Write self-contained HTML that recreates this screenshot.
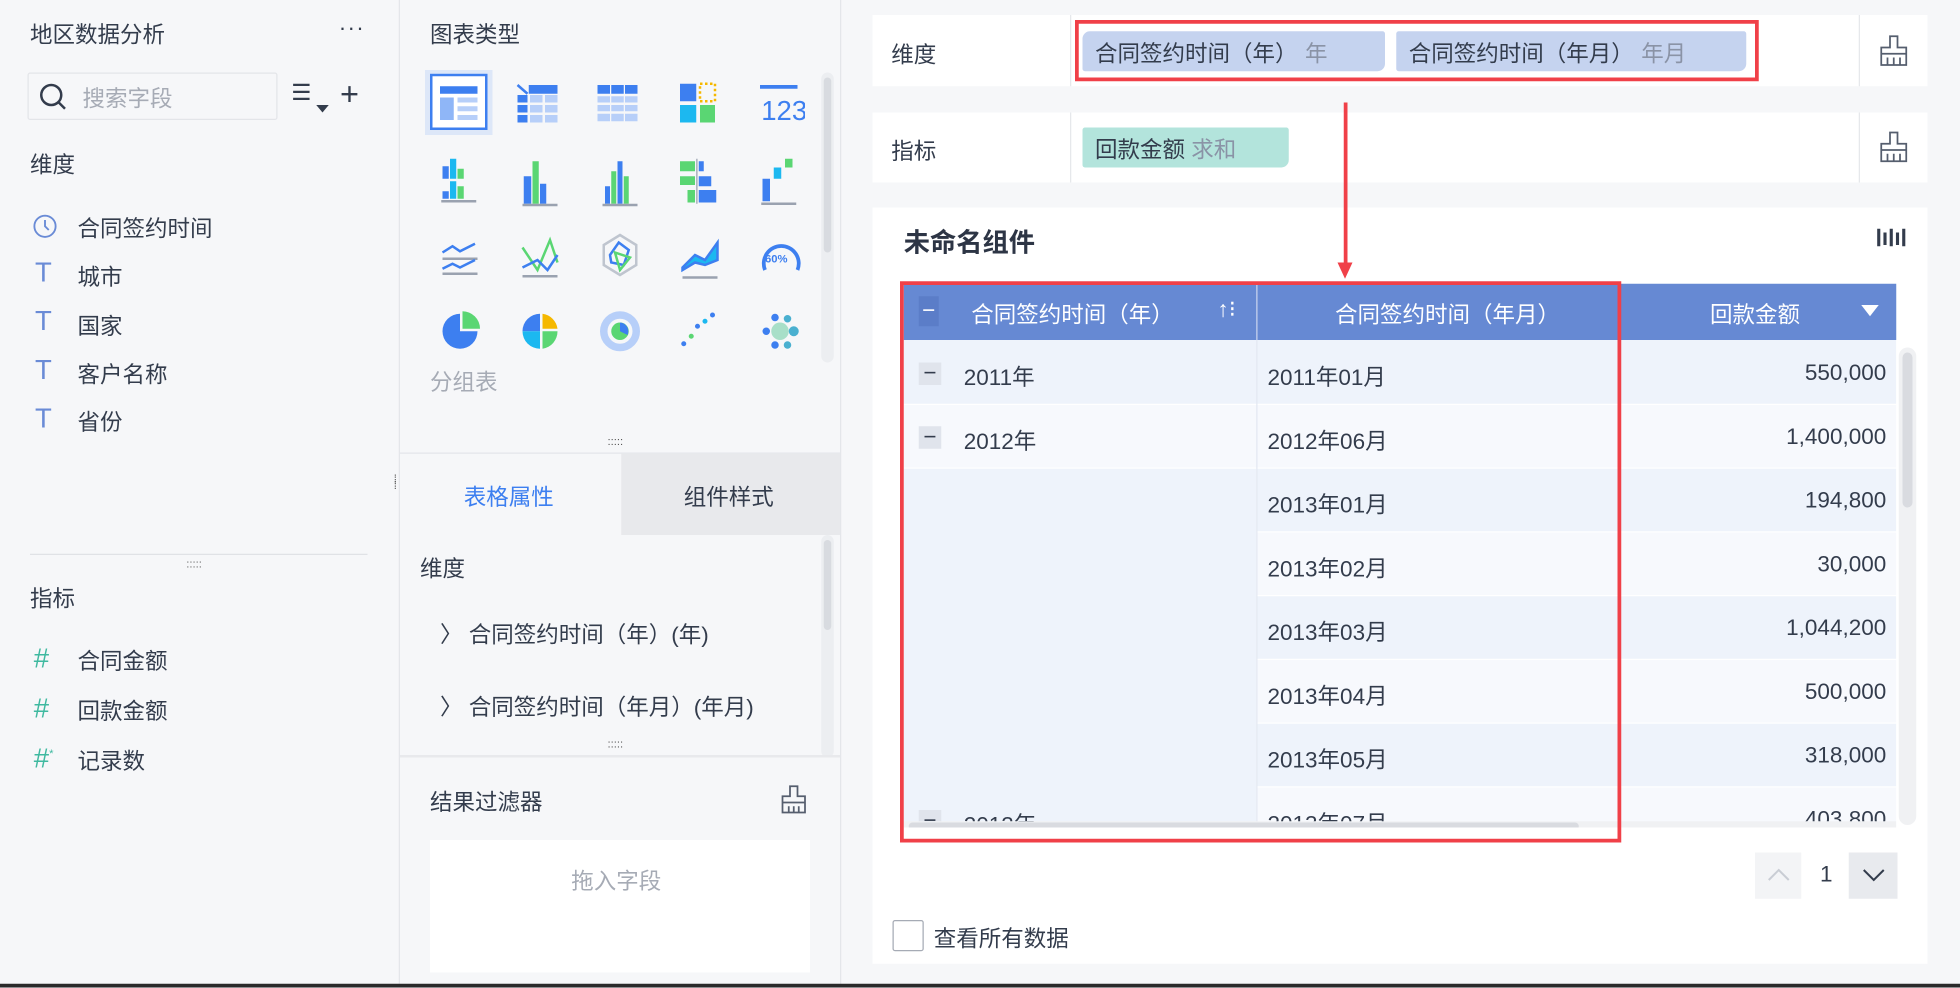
<!DOCTYPE html>
<html><head><meta charset="utf-8"><style>
*{box-sizing:border-box;margin:0;padding:0}
body{width:1960px;height:987px;overflow:hidden;background:#f6f7f9;font-family:"Liberation Sans","Noto Sans CJK SC",sans-serif;color:#333c4c}
#w{position:absolute;left:0;top:0;width:1568px;height:790px;transform:scale(1.25);transform-origin:0 0;background:#f6f7f9}
.a{position:absolute}
.t{font-size:18px;white-space:nowrap}
.ic{position:absolute;color:#6a8bd6;font-size:22px}
</style></head><body><div id="w">
<!-- left panel -->
<div class="a" style="left:319px;top:0;width:1px;height:790px;background:#e4e6ea"></div>
<div class="a t" style="left:24px;top:14px">地区数据分析</div>
<div class="a t" style="left:271px;top:12px;letter-spacing:1px">···</div>
<div class="a" style="left:22px;top:58px;width:200px;height:38px;border:1px solid #e3e5e9;border-radius:2px;background:#f6f7f9"></div>
<svg class="a" style="left:31px;top:66px" width="24" height="24"><circle cx="10" cy="10" r="8" fill="none" stroke="#333c4c" stroke-width="2"/><line x1="16" y1="16" x2="21" y2="21" stroke="#333c4c" stroke-width="2"/></svg>
<div class="a t" style="left:66px;top:65px;color:#a6abb5">搜索字段</div>
<div class="a" style="left:233px;top:64px;font-size:18px;color:#333c4c">☰</div>
<div class="a" style="left:253px;top:84px;width:0;height:0;border:5px solid transparent;border-top:6px solid #333c4c"></div>
<div class="a" style="left:272px;top:60px;font-size:26px;color:#333c4c">+</div>
<div class="a t" style="left:24px;top:118px">维度</div>
<svg class="a" style="left:26px;top:171px" width="20" height="20"><circle cx="10" cy="10" r="8.5" fill="none" stroke="#6a8bd6" stroke-width="1.5"/><path d="M10 5v5l3 3" fill="none" stroke="#6a8bd6" stroke-width="1.5"/></svg>
<div class="a t" style="left:62px;top:169px">合同签约时间</div>
<div class="ic" style="left:28px;top:205px">T</div><div class="a t" style="left:62px;top:208px">城市</div>
<div class="ic" style="left:28px;top:244px">T</div><div class="a t" style="left:62px;top:247px">国家</div>
<div class="ic" style="left:28px;top:283px">T</div><div class="a t" style="left:62px;top:286px">客户名称</div>
<div class="ic" style="left:28px;top:322px">T</div><div class="a t" style="left:62px;top:324px">省份</div>
<div class="a" style="left:24px;top:443px;width:270px;height:1px;background:#e0e2e6"></div>
<div class="a" style="left:149px;top:446px;font-size:9px;color:#666;letter-spacing:0">:::::</div>
<div class="a t" style="left:24px;top:465px">指标</div>
<div class="ic" style="left:27px;top:514px;color:#3fb9a0">#</div><div class="a t" style="left:62px;top:515px">合同金额</div>
<div class="ic" style="left:27px;top:554px;color:#3fb9a0">#</div><div class="a t" style="left:62px;top:555px">回款金额</div>
<div class="ic" style="left:27px;top:594px;color:#3fb9a0">#<sup style="font-size:9px">*</sup></div><div class="a t" style="left:62px;top:595px">记录数</div>
<!-- middle -->
<div class="a" style="left:672px;top:0;width:1px;height:790px;background:#e4e6ea"></div>
<div class="a t" style="left:344px;top:14px">图表类型</div>
<div class="a" style="left:340px;top:56px;width:54px;height:52px;background:#dde7f8"></div>
<div class="a" style="left:344px;top:59px;width:46px;height:45px;border:2px solid #3d7ff0;background:#fff"></div>
<svg class="a" style="left:344px;top:59px" width="300" height="230">
<rect x="8" y="10" width="30" height="6" fill="#3d7ff0"/><rect x="8" y="19" width="11" height="18" fill="#8fb6f7"/><rect x="22" y="19" width="16" height="4" fill="#b7cff9"/><rect x="22" y="26" width="16" height="4" fill="#b7cff9"/><rect x="22" y="33" width="16" height="4" fill="#b7cff9"/>
<g fill="#b7cff9"><rect x="80" y="17" width="10" height="6"/><rect x="92" y="17" width="10" height="6"/><rect x="80" y="25" width="10" height="6"/><rect x="92" y="25" width="10" height="6"/><rect x="80" y="33" width="10" height="6"/><rect x="92" y="33" width="10" height="6"/></g>
<g fill="#3d7ff0"><rect x="79" y="9" width="23" height="7"/><rect x="70" y="17" width="8" height="6"/><rect x="70" y="25" width="8" height="6"/><rect x="70" y="33" width="8" height="6"/></g><path d="M70 9l8 7" stroke="#3d7ff0" stroke-width="2"/>
<g fill="#3d7ff0"><rect x="134" y="9" width="10" height="7"/><rect x="145" y="9" width="10" height="7"/><rect x="156" y="9" width="10" height="7"/></g>
<g fill="#b7cff9"><rect x="134" y="18" width="10" height="5"/><rect x="145" y="18" width="10" height="5"/><rect x="156" y="18" width="10" height="5"/><rect x="134" y="25" width="10" height="5"/><rect x="145" y="25" width="10" height="5"/><rect x="156" y="25" width="10" height="5"/><rect x="134" y="32" width="10" height="6"/><rect x="145" y="32" width="10" height="6"/><rect x="156" y="32" width="10" height="6"/></g>
<rect x="200" y="8" width="13" height="14" fill="#3d7ff0"/><rect x="216" y="8" width="12" height="14" fill="none" stroke="#f5b800" stroke-width="2" stroke-dasharray="2 2"/><rect x="200" y="25" width="13" height="14" fill="#1cb8f0"/><rect x="216" y="25" width="12" height="14" fill="#5ad673"/>
<rect x="264" y="9" width="30" height="3" fill="#3d7ff0"/><text x="265" y="37" font-size="22" fill="#3d7ff0" font-family="Liberation Sans">123</text>
<g transform="translate(0,60)"><rect x="10" y="14" width="5" height="10" fill="#3d7ff0"/><rect x="16" y="8" width="5" height="16" fill="#1cb8f0"/><rect x="22" y="16" width="5" height="8" fill="#5ad673"/><rect x="10" y="34" width="5" height="6" fill="#3d7ff0"/><rect x="16" y="26" width="5" height="14" fill="#1cb8f0"/><rect x="22" y="30" width="5" height="10" fill="#5ad673"/><rect x="9" y="41" width="28" height="2" fill="#9aa2b0"/>
<rect x="75" y="22" width="6" height="22" fill="#3d7ff0"/><rect x="82" y="10" width="5" height="34" fill="#5ad673"/><rect x="88" y="28" width="5" height="16" fill="#3d7ff0"/><rect x="74" y="44" width="28" height="2" fill="#9aa2b0"/>
<rect x="140" y="30" width="4" height="14" fill="#3d7ff0"/><rect x="145" y="18" width="4" height="26" fill="#5ad673"/><rect x="150" y="10" width="4" height="34" fill="#3d7ff0"/><rect x="155" y="22" width="4" height="22" fill="#5ad673"/><rect x="138" y="44" width="28" height="2" fill="#9aa2b0"/>
<rect x="200" y="10" width="12" height="8" fill="#5ad673"/><rect x="200" y="22" width="12" height="7" fill="#5ad673"/><rect x="206" y="33" width="6" height="10" fill="#5ad673"/><rect x="213" y="8" width="1" height="36" fill="#9aa2b0"/><rect x="215" y="10" width="4" height="8" fill="#3d7ff0"/><rect x="215" y="22" width="10" height="8" fill="#3d7ff0"/><rect x="215" y="33" width="14" height="10" fill="#3d7ff0"/>
<rect x="266" y="24" width="6" height="18" fill="#3d7ff0"/><rect x="275" y="15" width="6" height="9" fill="#1cb8f0"/><rect x="284" y="8" width="6" height="7" fill="#5ad673"/><rect x="265" y="43" width="28" height="2" fill="#9aa2b0"/></g>
<g transform="translate(0,125)" fill="none" stroke-width="2"><path d="M10 18l8-5 6 4 12-6" stroke="#3d7ff0"/><path d="M10 23h28" stroke="#9aa2b0"/><path d="M10 31l8-4 6 3 12-6" stroke="#3d7ff0"/><path d="M10 35h28" stroke="#9aa2b0"/>
<path d="M74 14l12 18 10-24 6 18" stroke="#5ad673"/><path d="M74 30l12-6 8 8 8-12" stroke="#3d7ff0"/><path d="M74 37h28" stroke="#9aa2b0"/>
<path d="M152 4l13 8v16l-13 8-13-8V12z" stroke="#bfc5cf"/><path d="M144 20l7-10 8 6-4 12-10-2z" stroke="#3d7ff0"/><path d="M148 18l12 4-8 10z" stroke="#5ad673"/>
<path d="M202 30l10-10 8 4 10-14v14l-10 4-8-2-10 6z" fill="#1cb8f0" stroke="#3d7ff0"/><path d="M202 38h28" stroke="#9aa2b0"/>
<path d="M268 32a14 14 0 1 1 26 0" stroke="#3d7ff0" stroke-width="3"/><text x="268" y="26" font-size="9" fill="#3d7ff0" stroke="none" font-weight="bold" font-family="Liberation Sans">60%</text></g>
<g transform="translate(0,188)"><path d="M24 4a14 14 0 1 0 14 14H24z" fill="#3d7ff0"/><path d="M26 2v14h14A14 14 0 0 0 26 2z" fill="#5ad673"/>
<path d="M88 4a14 14 0 0 0-14 14h14z" fill="#3d7ff0"/><path d="M88 18H74a14 14 0 0 0 14 14z" fill="#1cb8f0"/><path d="M90 18v14a14 14 0 0 0 12-14z" fill="#5ad673"/><path d="M90 4v12h12A14 14 0 0 0 90 4z" fill="#f5b800"/>
<circle cx="152" cy="18" r="13" fill="none" stroke="#b7cff9" stroke-width="6"/><circle cx="152" cy="18" r="7" fill="#5ad673"/><path d="M152 11v7l6 3a7 7 0 0 0-6-10z" fill="#3d7ff0"/>
<circle cx="203" cy="28" r="2" fill="#3d7ff0"/><circle cx="209" cy="22" r="2" fill="#5ad673"/><circle cx="214" cy="14" r="2" fill="#3d7ff0"/><circle cx="220" cy="10" r="2" fill="#1cb8f0"/><circle cx="226" cy="5" r="2" fill="#3d7ff0"/>
<circle cx="280" cy="18" r="7" fill="#a8dfc8"/><circle cx="269" cy="18" r="3" fill="#3d7ff0"/><circle cx="291" cy="18" r="4" fill="#4ab0d0"/><circle cx="276" cy="7" r="3" fill="#3d7ff0"/><circle cx="286" cy="8" r="3" fill="#4ab0d0"/><circle cx="276" cy="29" r="3" fill="#3d7ff0"/><circle cx="286" cy="29" r="3" fill="#4ab0d0"/></g>
</svg>
<div class="a t" style="left:344px;top:292px;color:#a6abb5">分组表</div>
<div class="a" style="left:657px;top:58px;width:10px;height:232px;border-radius:5px;background:#eceef1"></div>
<div class="a" style="left:659px;top:62px;width:6px;height:140px;border-radius:3px;background:#d8dbe0"></div>
<div class="a" style="left:486px;top:348px;font-size:9px;color:#555">:::::</div>
<div class="a" style="left:320px;top:362px;width:352px;height:1px;background:#e4e6ea"></div>
<div class="a" style="left:497px;top:363px;width:175px;height:65px;background:#e8e9ec"></div>
<div class="a t" style="left:371px;top:384px;color:#3d7ff0">表格属性</div>
<div class="a t" style="left:547px;top:384px">组件样式</div>
<div class="a" style="left:315px;top:381px;font-size:9px;color:#555;line-height:5px">⁞<br>⁞</div>
<div class="a t" style="left:336px;top:441px">维度</div>
<div class="a t" style="left:352px;top:494px">〉 合同签约时间（年）(年)</div>
<div class="a t" style="left:352px;top:552px">〉 合同签约时间（年月）(年月)</div>
<div class="a" style="left:657px;top:428px;width:10px;height:178px;border-radius:5px;background:#eceef1"></div>
<div class="a" style="left:659px;top:432px;width:6px;height:72px;border-radius:3px;background:#d8dbe0"></div>
<div class="a" style="left:486px;top:590px;font-size:9px;color:#555">:::::</div>
<div class="a" style="left:320px;top:604px;width:352px;height:2px;background:#e8e9ec"></div>
<div class="a t" style="left:344px;top:628px">结果过滤器</div>
<svg class="a" style="left:624px;top:628px" width="22" height="24"><path d="M8 1h6v8h6v5H2V9h6zM2 14h18v8H2zM7 17v5M11 17v5M15 17v5" fill="none" stroke="#555e6e" stroke-width="1.4"/></svg>
<div class="a" style="left:344px;top:672px;width:304px;height:106px;background:#fff"></div>
<div class="a t" style="left:457px;top:691px;color:#a6abb5">拖入字段</div>
<div class="a" style="left:0;top:787px;width:1568px;height:3px;background:#2a2a2a"></div>
<!-- right -->
<div class="a" style="left:698px;top:12px;width:844px;height:57px;background:#fff"></div>
<div class="a" style="left:856px;top:12px;width:1px;height:57px;background:#e6e8eb"></div>
<div class="a" style="left:1487px;top:12px;width:1px;height:57px;background:#e6e8eb"></div>
<div class="a t" style="left:713px;top:30px">维度</div>
<div class="a" style="left:866px;top:25px;width:242px;height:32px;background:#c5d3ef;border-radius:6px 2px 6px 2px"></div>
<div class="a t" style="left:876px;top:29px">合同签约时间（年）<span style="color:#8a93a6;margin-left:6px">年</span></div>
<div class="a" style="left:1117px;top:25px;width:280px;height:32px;background:#c5d3ef;border-radius:2px 2px 6px 2px"></div>
<div class="a t" style="left:1127px;top:29px">合同签约时间（年月）<span style="color:#8a93a6;margin-left:6px">年月</span></div>
<div class="a" style="left:860px;top:16px;width:547px;height:49px;border:3px solid #f04048"></div>
<svg class="a" style="left:1503px;top:28px" width="24" height="26"><path d="M9 1h6v9h7v5H2v-5h7zM2 15h20v9H2zM7 18v6M12 18v6M17 18v6" fill="none" stroke="#555e6e" stroke-width="1.4"/></svg>
<div class="a" style="left:698px;top:90px;width:844px;height:56px;background:#fff"></div>
<div class="a" style="left:856px;top:90px;width:1px;height:56px;background:#e6e8eb"></div>
<div class="a" style="left:1487px;top:90px;width:1px;height:56px;background:#e6e8eb"></div>
<div class="a t" style="left:713px;top:107px">指标</div>
<div class="a" style="left:866px;top:102px;width:165px;height:32px;background:#b3e4dc;border-radius:2px 2px 6px 2px"></div>
<div class="a t" style="left:876px;top:106px">回款金额 <span style="color:#8a93a6">求和</span></div>
<svg class="a" style="left:1503px;top:105px" width="24" height="26"><path d="M9 1h6v9h7v5H2v-5h7zM2 15h20v9H2zM7 18v6M12 18v6M17 18v6" fill="none" stroke="#555e6e" stroke-width="1.4"/></svg>
<div class="a" style="left:698px;top:166px;width:844px;height:605px;background:#fff"></div>
<div class="a" style="left:723px;top:178px;font-size:21px;font-weight:bold;color:#2d3545">未命名组件</div>
<svg class="a" style="left:1501px;top:181px" width="26" height="18"><path d="M2 2v14M7 5v10M12 2v14M17 5v10M22 2v14" stroke="#333c4c" stroke-width="2.5"/></svg>
<!-- table -->
<div class="a" style="left:723px;top:227px;width:794px;height:45px;background:#6689d3"></div>
<div class="a" style="left:1005px;top:227px;width:1px;height:45px;background:#c8d4ef"></div>
<div class="a" style="left:735px;top:237px;width:16px;height:24px;background:#5b7dc8;color:#fff;font-size:18px;text-align:center;line-height:22px">−</div>
<div class="a t" style="left:777px;top:238px;color:#fff">合同签约时间（年）</div>
<div class="a t" style="left:974px;top:237px;color:#fff">↑⁝</div>
<div class="a t" style="left:1068px;top:238px;color:#fff">合同签约时间（年月）</div>
<div class="a t" style="left:1368px;top:238px;color:#fff">回款金额</div>
<div class="a" style="left:1489px;top:244px;width:0;height:0;border:7px solid transparent;border-top:9px solid #fff"></div>
<div class="a" style="left:723px;top:272px;width:794px;height:390px;overflow:hidden;font-size:18px">
<div class="a" style="left:0;top:0;width:794px;height:51px;background:#eef3fb"></div>
<div class="a" style="left:0;top:52px;width:794px;height:50px;background:#f7f9fd"></div>
<div class="a" style="left:0;top:103px;width:282px;height:300px;background:#eef3fb"></div>
<div class="a" style="left:283px;top:103px;width:511px;height:50px;background:#eef3fb"></div>
<div class="a" style="left:283px;top:154px;width:511px;height:50px;background:#f7f9fd"></div>
<div class="a" style="left:283px;top:205px;width:511px;height:50px;background:#eef3fb"></div>
<div class="a" style="left:283px;top:256px;width:511px;height:50px;background:#f7f9fd"></div>
<div class="a" style="left:283px;top:307px;width:511px;height:50px;background:#eef3fb"></div>
<div class="a" style="left:283px;top:358px;width:511px;height:50px;background:#f7f9fd"></div>
<div class="a" style="left:282px;top:0;width:1px;height:390px;background:#e3e8f2"></div>
<div class="a" style="left:12px;top:18px;width:18px;height:18px;background:#e0e4ec;text-align:center;line-height:16px">−</div><div class="a" style="left:48px;top:16px">2011年</div>
<div class="a" style="left:12px;top:69px;width:18px;height:18px;background:#e0e4ec;text-align:center;line-height:16px">−</div><div class="a" style="left:48px;top:67px">2012年</div>
<div class="a" style="left:12px;top:376px;width:18px;height:18px;background:#e0e4ec;text-align:center;line-height:16px">−</div><div class="a" style="left:48px;top:374px">2013年</div>
<div class="a" style="left:291px;top:16px">2011年01月</div><div class="a" style="right:8px;top:16px">550,000</div>
<div class="a" style="left:291px;top:67px">2012年06月</div><div class="a" style="right:8px;top:67px">1,400,000</div>
<div class="a" style="left:291px;top:118px">2013年01月</div><div class="a" style="right:8px;top:118px">194,800</div>
<div class="a" style="left:291px;top:169px">2013年02月</div><div class="a" style="right:8px;top:169px">30,000</div>
<div class="a" style="left:291px;top:220px">2013年03月</div><div class="a" style="right:8px;top:220px">1,044,200</div>
<div class="a" style="left:291px;top:271px">2013年04月</div><div class="a" style="right:8px;top:271px">500,000</div>
<div class="a" style="left:291px;top:322px">2013年05月</div><div class="a" style="right:8px;top:322px">318,000</div>
<div class="a" style="left:291px;top:373px">2013年07月</div><div class="a" style="right:8px;top:373px">403,800</div>
<div class="a" style="left:0;top:385px;width:794px;height:5px;background:#f0f1f3"></div>
<div class="a" style="left:4px;top:386px;width:536px;height:6px;border-radius:3px;background:#d9dbe0"></div>
</div>
<div class="a" style="left:1519px;top:278px;width:14px;height:382px;border-radius:7px;background:#f0f1f3"></div>
<div class="a" style="left:1522px;top:282px;width:8px;height:124px;border-radius:4px;background:#d9dbe0"></div>
<div class="a" style="left:720px;top:225px;width:577px;height:449px;border:3px solid #f04048"></div>
<div class="a" style="left:1075px;top:82px;width:3px;height:132px;background:#f04048"></div>
<div class="a" style="left:1070px;top:210px;width:0;height:0;border:6.5px solid transparent;border-top:13px solid #f04048"></div>
<!-- pager -->
<div class="a" style="left:1404px;top:682px;width:37px;height:37px;background:#f3f4f6"></div>
<svg class="a" style="left:1412px;top:692px" width="22" height="16"><path d="M3 12l8-8 8 8" fill="none" stroke="#c9cdd4" stroke-width="1.6"/></svg>
<div class="a t" style="left:1456px;top:689px">1</div>
<div class="a" style="left:1479px;top:682px;width:39px;height:37px;background:#e8eaee"></div>
<svg class="a" style="left:1488px;top:692px" width="22" height="16"><path d="M3 4l8 8 8-8" fill="none" stroke="#333c4c" stroke-width="1.6"/></svg>
<div class="a" style="left:714px;top:736px;width:25px;height:25px;border:1.5px solid #a6abb5;border-radius:2px"></div>
<div class="a t" style="left:747px;top:737px">查看所有数据</div>
</div></body></html>
